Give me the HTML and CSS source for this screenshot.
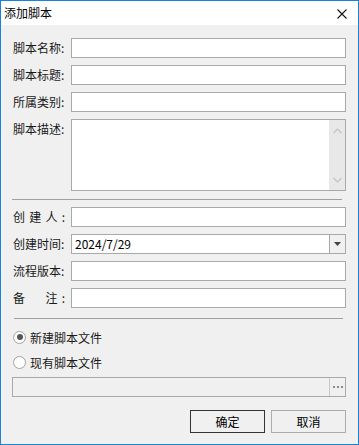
FILE: index.html
```html
<!DOCTYPE html>
<html lang="zh-CN">
<head>
    <meta charset="UTF-8">
    <title>添加脚本</title>
    <link rel="stylesheet" href="styles.css">
</head>
<body>
    <div class="window">
        <div class="titlebar">
            <span class="title">添加脚本</span>
            <svg class="close" width="10" height="10" viewBox="0 0 10 10">
                <path d="M0.5 0.5 L9.5 9.5 M9.5 0.5 L0.5 9.5" stroke="#111" stroke-width="1.1" fill="none"/>
            </svg>
        </div>
        <div class="content">
            <div class="form">
                <label class="lbl">脚本名称:</label>
                <div class="box"></div>
                <label class="lbl">脚本标题:</label>
                <div class="box"></div>
                <label class="lbl">所属类别:</label>
                <div class="box"></div>
                <label class="lbl top">脚本描述:</label>
                <div class="box memo">
                    <div class="scroll">
                        <svg width="9" height="6" viewBox="0 0 9 6"><path d="M0.5 5 L4.5 1 L8.5 5" stroke="#c4c4c4" stroke-width="1.2" fill="none"/></svg>
                        <svg width="9" height="6" viewBox="0 0 9 6"><path d="M0.5 1 L4.5 5 L8.5 1" stroke="#c4c4c4" stroke-width="1.2" fill="none"/></svg>
                    </div>
                </div>
            </div>

            <div class="sep"></div>

            <div class="form">
                <label class="lbl spaced"><span>创</span><span>建</span><span>人</span><span>:</span></label>
                <div class="box"></div>
                <label class="lbl">创建时间:</label>
                <div class="box combo">
                    <span class="value">2024/7/29</span>
                    <div class="drop">
                        <svg width="7" height="4" viewBox="0 0 7 4"><path d="M0 0 H7 L3.5 4 Z" fill="#444"/></svg>
                    </div>
                </div>
                <label class="lbl">流程版本:</label>
                <div class="box"></div>
                <label class="lbl spaced"><span>备</span><span class="blank"></span><span>注</span><span>:</span></label>
                <div class="box"></div>
            </div>

            <div class="sep sep2"></div>

            <div class="radio-row">
                <span class="radio checked"></span>
                <span>新建脚本文件</span>
            </div>
            <div class="radio-row second">
                <span class="radio"></span>
                <span>现有脚本文件</span>
            </div>

            <div class="box file">
                <div class="browse">
                    <svg width="10" height="2" viewBox="0 0 10 2">
                        <rect x="0" y="0" width="2" height="2" fill="#8a8a8a"/>
                        <rect x="4" y="0" width="2" height="2" fill="#8a8a8a"/>
                        <rect x="8" y="0" width="2" height="2" fill="#8a8a8a"/>
                    </svg>
                </div>
            </div>

            <div class="buttons">
                <div class="btn default">确定</div>
                <div class="btn">取消</div>
            </div>
        </div>
    </div>
</body>
</html>
```

FILE: styles.css
```css
* {
    box-sizing: border-box;
}

body {
    margin: 0;
    font-family: "Noto Sans CJK SC", "Noto Sans", sans-serif;
    font-size: 12px;
    color: #1a1a1a;
}

.window {
    width: 359px;
    height: 445px;
    border: 1px solid #1883d7;
    background: #f0f0f0;
    display: flex;
    flex-direction: column;
}

.titlebar {
    height: 24px;
    background: #fff;
    display: flex;
    align-items: center;
    justify-content: space-between;
    padding: 0 11px 0 3px;
}

.title {
    line-height: 24px;
    color: #000;
}

.close {
    display: block;
    margin-top: 1px;
}

.content {
    padding: 13px 12px 0 11px;
}

.form {
    display: grid;
    grid-template-columns: 59px 1fr;
    row-gap: 7px;
    align-items: center;
}

.lbl {
    padding-left: 1px;
    line-height: 20px;
}

.lbl.top {
    align-self: start;
}

.lbl.spaced {
    display: flex;
    justify-content: space-between;
    width: 53px;
}

.lbl .blank {
    width: 12px;
}

.box {
    height: 20px;
    border: 1px solid #a9a9a9;
    background: #fff;
}

.memo {
    height: 72px;
    display: flex;
    justify-content: flex-end;
}

.scroll {
    width: 16px;
    background: #e8e8e8;
    display: flex;
    flex-direction: column;
    justify-content: space-between;
    align-items: center;
    padding: 8px 0 7px;
}

.scroll svg {
    display: block;
}

.combo {
    display: flex;
    align-items: center;
}

.combo .value {
    flex: 1;
    padding-left: 3px;
    line-height: 18px;
    color: #000;
}

.drop {
    width: 16px;
    height: 18px;
    border-left: 1px solid #a9a9a9;
    background: #f0f0f0;
    display: flex;
    align-items: center;
    justify-content: center;
}

.drop svg {
    display: block;
}

.sep {
    height: 1px;
    background: #a0a0a0;
    margin: 8px 4px 7px 0;
}

.sep2 {
    margin: 10px 3px 8px 2px;
}

.radio-row {
    height: 20px;
    display: flex;
    align-items: center;
    gap: 4px;
    padding-left: 1px;
}

.radio-row.second {
    margin-top: 5px;
}

.radio {
    width: 13px;
    height: 13px;
    border-radius: 50%;
    border: 1px solid #a3a3a3;
    background: #fff;
    display: flex;
    align-items: center;
    justify-content: center;
}

.radio.checked::after {
    content: "";
    width: 6px;
    height: 6px;
    border-radius: 50%;
    background: #555;
}

.file {
    margin-top: 5px;
    background: #f0f0f0;
    display: flex;
    justify-content: flex-end;
}

.browse {
    width: 16px;
    height: 18px;
    border-left: 1px solid #c8c8c8;
    display: flex;
    align-items: center;
    justify-content: center;
}

.browse svg {
    display: block;
}

.buttons {
    margin-top: 13px;
    display: flex;
    justify-content: flex-end;
    gap: 6px;
}

.btn {
    width: 75px;
    height: 23px;
    border: 1px solid #adadad;
    background: #f0f0f0;
    text-align: center;
    line-height: 21px;
    color: #000;
}

.btn.default {
    border-color: #333;
}
```
